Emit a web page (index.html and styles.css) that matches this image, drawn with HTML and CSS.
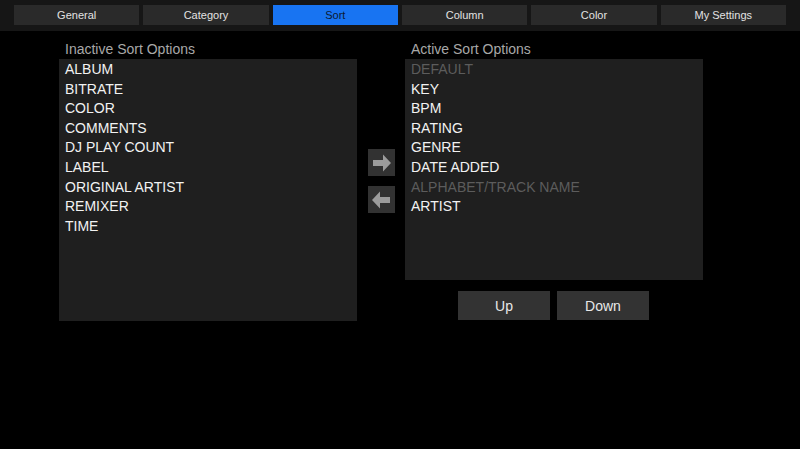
FILE: index.html
```html
<!DOCTYPE html>
<html>
<head>
<meta charset="utf-8">
<link rel="stylesheet" href="styles.css">
</head>
<body>
<div class="tabbar">
  <div class="tab">General</div>
  <div class="tab">Category</div>
  <div class="tab active">Sort</div>
  <div class="tab">Column</div>
  <div class="tab">Color</div>
  <div class="tab">My Settings</div>
</div>
<div class="main">
  <div class="col">
    <div class="title">Inactive Sort Options</div>
    <div class="list inactive">
      <div class="item">ALBUM</div>
      <div class="item">BITRATE</div>
      <div class="item">COLOR</div>
      <div class="item">COMMENTS</div>
      <div class="item">DJ PLAY COUNT</div>
      <div class="item">LABEL</div>
      <div class="item">ORIGINAL ARTIST</div>
      <div class="item">REMIXER</div>
      <div class="item">TIME</div>
    </div>
  </div>
  <div class="mid">
    <div class="arrow">
      <svg width="27" height="27" viewBox="0 0 27 27"><polygon points="5,11 15,11 15,5.5 23,14 15,22.5 15,17 5,17" fill="#9c9c9c"/></svg>
    </div>
    <div class="arrow">
      <svg width="27" height="27" viewBox="0 0 27 27"><polygon points="22,11 12,11 12,5.5 4,14 12,22.5 12,17 22,17" fill="#9c9c9c"/></svg>
    </div>
  </div>
  <div class="col">
    <div class="title">Active Sort Options</div>
    <div class="list active-list">
      <div class="item dim">DEFAULT</div>
      <div class="item">KEY</div>
      <div class="item">BPM</div>
      <div class="item">RATING</div>
      <div class="item">GENRE</div>
      <div class="item">DATE ADDED</div>
      <div class="item dim">ALPHABET/TRACK NAME</div>
      <div class="item">ARTIST</div>
    </div>
    <div class="btnrow">
      <div class="btn">Up</div>
      <div class="btn">Down</div>
    </div>
  </div>
</div>
</body>
</html>
```
FILE: styles.css
```css
html, body {
  margin: 0;
  padding: 0;
  background: #000;
  font-family: "Liberation Sans", Arial, sans-serif;
  width: 800px;
  height: 449px;
  overflow: hidden;
}
.tabbar {
  height: 31px;
  box-sizing: border-box;
  background: #161616;
  padding: 5px 14px 0 14px;
  display: flex;
  gap: 4px;
}
.tab {
  flex: 1;
  height: 20px;
  background: #2a2a2a;
  color: #e2e2e2;
  font-size: 11px;
  display: flex;
  align-items: center;
  justify-content: center;
}
.tab.active {
  background: #1874f2;
  color: #0c1a33;
}
.main {
  display: flex;
  padding-left: 59px;
  padding-top: 9px;
}
.col {
  width: 298px;
  display: flex;
  flex-direction: column;
}
.title {
  height: 19px;
  line-height: 18px;
  padding-left: 6px;
  color: #a8a8a8;
  font-size: 14px;
}
.list {
  background: #1f1f1f;
  box-sizing: border-box;
  padding-top: 1px;
}
.list.inactive { height: 262px; }
.list.active-list { height: 221px; }
.item {
  height: 19.6px;
  line-height: 19.6px;
  padding-left: 6px;
  color: #f2f2f2;
  font-size: 14px;
}
.item.dim { color: #5c5c5c; }
.mid {
  width: 48px;
  padding-top: 109px;
  padding-left: 11px;
  box-sizing: border-box;
  display: flex;
  flex-direction: column;
  gap: 10px;
}
.arrow {
  width: 27px;
  height: 27px;
  background: #323232;
  display: flex;
}
.btnrow {
  display: flex;
  justify-content: center;
  gap: 7px;
  margin-top: 11px;
  padding-right: 1px;
}
.btn {
  width: 92px;
  height: 29px;
  background: #333;
  color: #e8e8e8;
  font-size: 14px;
  display: flex;
  align-items: center;
  justify-content: center;
}
```
